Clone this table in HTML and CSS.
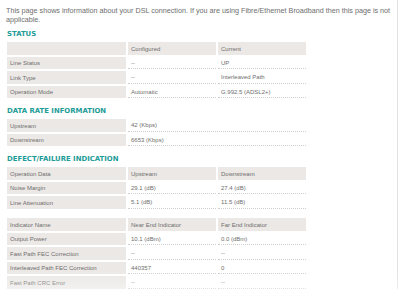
FILE: index.html
```html
<!DOCTYPE html>
<html>
<head>
    <title>DSL Status</title>
    <link rel="stylesheet" href="styles.css">
</head>
<body>
    <div class="page">
        <p class="intro">This page shows information about your DSL connection. If you are using Fibre/Ethernet Broadband then this page is not applicable.</p>

        <h2 class="section first">Status</h2>
        <table class="info">
            <tr class="head"><td class="label"></td><td>Configured</td><td>Current</td></tr>
            <tr><td class="label">Line Status</td><td>--</td><td>UP</td></tr>
            <tr><td class="label">Link Type</td><td>--</td><td>Interleaved Path</td></tr>
            <tr><td class="label">Operation Mode</td><td>Automatic</td><td>G.992.5 (ADSL2+)</td></tr>
        </table>

        <h2 class="section">Data Rate Information</h2>
        <table class="info">
            <tr><td class="label">Upstream</td><td class="wide">42 (Kbps)</td></tr>
            <tr><td class="label">Downstream</td><td class="wide">6653 (Kbps)</td></tr>
        </table>

        <h2 class="section">Defect/Failure Indication</h2>
        <table class="info">
            <tr class="head"><td class="label">Operation Data</td><td>Upstream</td><td>Downstream</td></tr>
            <tr><td class="label">Noise Margin</td><td>29.1 (dB)</td><td>27.4 (dB)</td></tr>
            <tr><td class="label">Line Attenuation</td><td>5.1 (dB)</td><td>11.5 (dB)</td></tr>
        </table>

        <table class="info spaced">
            <tr class="head"><td class="label">Indicator Name</td><td>Near End Indicator</td><td>Far End Indicator</td></tr>
            <tr><td class="label">Output Power</td><td>10.1 (dBm)</td><td>0.0 (dBm)</td></tr>
            <tr><td class="label">Fast Path FEC Correction</td><td>--</td><td>--</td></tr>
            <tr><td class="label">Interleaved Path FEC Correction</td><td>440357</td><td>0</td></tr>
            <tr><td class="label">Fast Path CRC Error</td><td>--</td><td>--</td></tr>
        </table>
    </div>
    <div class="fade"></div>
</body>
</html>
```

FILE: styles.css
```css
body {
    margin: 0;
    font-family: 'Liberation Sans', Arial, sans-serif;
    color: #6e6e6e;
    background-color: #fff;
    overflow: hidden;
}
.page {
    padding: 6px 0 0 6px;
    margin-right: 2px;
    border-right: 1px solid #e4e1de;
    height: 289px;
    box-sizing: border-box;
    overflow: hidden;
}
.intro {
    font-size: 7.2px;
    line-height: 9px;
    margin: 0;
    width: 385px;
}
.section {
    font-family: 'DejaVu Sans', sans-serif;
    font-size: 6.9px;
    font-weight: bold;
    text-transform: uppercase;
    color: #1d9b98;
    margin: 6px 0 1px 1px;
    line-height: 10px;
}
.section.first {
    margin-top: 5px;
}
.info {
    border-collapse: separate;
    border-spacing: 2px;
    margin-left: -1px;
    font-size: 6px;
}
.info td {
    width: 88px;
    height: 12px;
    padding: 0 0 0 3px;
    border-bottom: 1px dotted #cfcfcf;
    box-sizing: border-box;
    vertical-align: middle;
}
.info tr:nth-child(odd) td {
    height: 13px;
}
.info td.label {
    width: 119px;
    background-color: #ebe8e5;
    border-bottom: none;
}
.info td.wide {
    width: 178px;
}
.info tr.head td {
    background-color: #ebe8e5;
    border-bottom: none;
}
.spaced {
    margin-top: 5px;
}
.fade {
    position: fixed;
    left: 0;
    right: 0;
    bottom: 0;
    height: 18px;
    background: linear-gradient(to bottom, rgba(255,255,255,0), rgba(255,255,255,0.4));
}
```
